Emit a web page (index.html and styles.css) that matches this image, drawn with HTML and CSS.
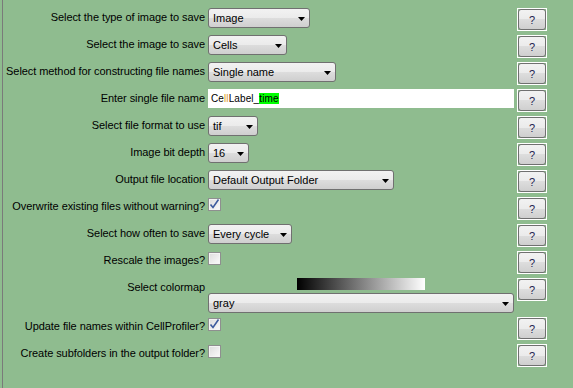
FILE: index.html
```html
<!DOCTYPE html>
<html lang="en">
<head>
    <meta charset="UTF-8">
    <title>SaveImages settings</title>
    <link rel="stylesheet" href="styles.css">
</head>
<body>
    <div class="panel">
        <div class="label">Select the type of image to save</div>
        <div class="cell"><div class="combo" style="width: 102px;">Image</div></div>
        <div class="help-wrap"><button class="help">?</button></div>

        <div class="label">Select the image to save</div>
        <div class="cell"><div class="combo" style="width: 79px;">Cells</div></div>
        <div class="help-wrap"><button class="help">?</button></div>

        <div class="label">Select method for constructing file names</div>
        <div class="cell"><div class="combo" style="width: 128px;">Single name</div></div>
        <div class="help-wrap"><button class="help">?</button></div>

        <div class="label">Enter single file name</div>
        <div class="cell">
            <div class="text-input">Ce<span class="hl-yellow">ll</span>Label_<span class="hl-green">time</span></div>
        </div>
        <div class="help-wrap"><button class="help">?</button></div>

        <div class="label">Select file format to use</div>
        <div class="cell"><div class="combo" style="width: 50px;">tif</div></div>
        <div class="help-wrap"><button class="help">?</button></div>

        <div class="label">Image bit depth</div>
        <div class="cell"><div class="combo" style="width: 41px;">16</div></div>
        <div class="help-wrap"><button class="help">?</button></div>

        <div class="label">Output file location</div>
        <div class="cell"><div class="combo" style="width: 186px;">Default Output Folder</div></div>
        <div class="help-wrap"><button class="help">?</button></div>

        <div class="label">Overwrite existing files without warning?</div>
        <div class="cell">
            <div class="check">
                <svg width="11" height="11" viewBox="0 0 11 11"><path d="M1.5 5.5 L4 8.5 L9.5 0.5" fill="none" stroke="#3d5c9e" stroke-width="1.6"/></svg>
            </div>
        </div>
        <div class="help-wrap"><button class="help">?</button></div>

        <div class="label">Select how often to save</div>
        <div class="cell"><div class="combo" style="width: 84px;">Every cycle</div></div>
        <div class="help-wrap"><button class="help">?</button></div>

        <div class="label">Rescale the images?</div>
        <div class="cell"><div class="check"></div></div>
        <div class="help-wrap"><button class="help">?</button></div>

        <div class="label">Select colormap</div>
        <div class="cell colormap-cell">
            <div class="colormap-bar"></div>
            <div class="combo wide">gray</div>
        </div>
        <div class="help-wrap"><button class="help">?</button></div>

        <div class="label">Update file names within CellProfiler?</div>
        <div class="cell">
            <div class="check">
                <svg width="11" height="11" viewBox="0 0 11 11"><path d="M1.5 5.5 L4 8.5 L9.5 0.5" fill="none" stroke="#3d5c9e" stroke-width="1.6"/></svg>
            </div>
        </div>
        <div class="help-wrap"><button class="help">?</button></div>

        <div class="label">Create subfolders in the output folder?</div>
        <div class="cell"><div class="check"></div></div>
        <div class="help-wrap"><button class="help">?</button></div>
    </div>
</body>
</html>
```

FILE: styles.css
```css
html, body {
    margin: 0;
    padding: 0;
    height: 100%;
    background-color: #8fbc8f;
    font-family: "Liberation Sans", Arial, sans-serif;
    font-size: 11px;
    color: #000;
    overflow: hidden;
}

.panel {
    margin-left: 2px;
    border-left: 1px solid #7a7a7a;
    height: 100%;
    box-sizing: border-box;
    padding-top: 8px;
    display: grid;
    grid-template-columns: 202px 306px 30px;
    grid-template-rows: repeat(10, 23px) 35px repeat(2, 23px);
    column-gap: 3px;
    row-gap: 4px;
    align-content: start;
    align-items: start;
}

.label {
    text-align: right;
    line-height: 18px;
    white-space: nowrap;
    letter-spacing: -0.07px;
}

.cell {
    display: flex;
    flex-direction: column;
    align-items: flex-start;
}

/* combo box */
.combo {
    position: relative;
    box-sizing: border-box;
    height: 20px;
    padding: 1px 0 0 4px;
    line-height: 17px;
    border: 1px solid #707070;
    border-radius: 3px;
    background: linear-gradient(#f2f2f2 0%, #ebebeb 50%, #dddddd 50%, #cfcfcf 100%);
    white-space: nowrap;
}

.combo::after {
    content: "";
    position: absolute;
    right: 4px;
    top: 8px;
    width: 7px;
    height: 4px;
    background: #000;
    clip-path: polygon(0 0, 100% 0, 50% 100%);
}

.combo.wide {
    width: 306px;
}

/* text field */
.text-input {
    box-sizing: border-box;
    width: 306px;
    height: 19px;
    background: #fff;
    border: 1px solid #fff;
    padding-left: 2px;
    font-size: 10px;
    line-height: 17px;
    letter-spacing: 0.1px;
}

.hl-yellow {
    color: #e0a020;
}

.hl-green {
    background: #00ff00;
}

/* checkbox */
.check {
    box-sizing: border-box;
    width: 13px;
    height: 13px;
    margin-top: 1px;
    border: 1px solid #8e8f8f;
    box-shadow: inset 0 0 0 1px #f4f4f4;
    background: linear-gradient(135deg, #dcdcdc, #fbfbfb);
    display: flex;
    align-items: center;
    justify-content: center;
}

.check svg {
    display: block;
}

/* colormap preview */
.colormap-cell {
    align-items: stretch;
}

.colormap-bar {
    align-self: center;
    width: 128px;
    height: 12px;
    margin-bottom: 3px;
    background: linear-gradient(to right, #000, #fff);
}

/* help buttons */
.help-wrap {
    box-sizing: border-box;
    width: 30px;
    height: 23px;
    border: 1px solid #fff;
}

.help {
    display: block;
    width: 100%;
    height: 100%;
    margin: 0;
    padding: 0;
    border: 1px solid #707070;
    border-radius: 3px;
    background: linear-gradient(#f2f2f2 0%, #ebebeb 50%, #dddddd 50%, #cfcfcf 100%);
    font-family: "Liberation Sans", Arial, sans-serif;
    font-size: 11px;
    color: #1c1c50;
    line-height: 18px;
}
```
